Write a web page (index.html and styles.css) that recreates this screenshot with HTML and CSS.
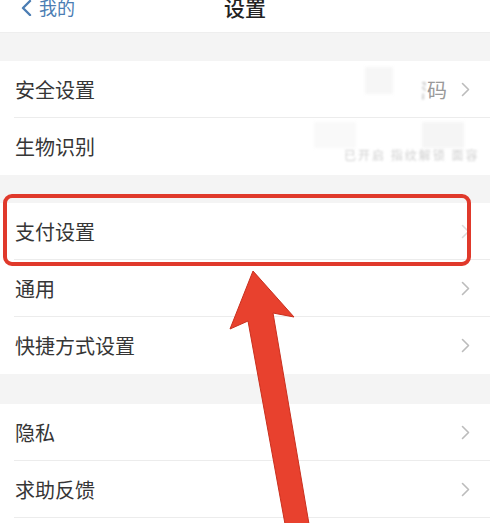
FILE: index.html
```html
<!DOCTYPE html>
<html lang="zh-CN">
<head>
    <meta charset="UTF-8">
    <meta name="viewport" content="width=device-width, initial-scale=1.0">
    <title>设置</title>
    <link rel="stylesheet" href="styles.css">
</head>
<body>
    <header class="nav-bar">
        <div class="nav-inner">
            <a href="#" class="nav-back">
                <svg class="back-icon" viewBox="0 0 12 16" width="12" height="16">
                    <polyline points="10,1 3,8 10,15" fill="none" stroke="currentColor" stroke-width="2.4" stroke-linejoin="round" stroke-linecap="round"/>
                </svg>
                我的
            </a>
            <h1 class="nav-title">设置</h1>
        </div>
    </header>

    <div class="group-gap"></div>

    <section class="group">
        <div class="cell">
            <span class="cell-label">安全设置</span>
            <span class="mosaic mosaic-square"></span>
            <span class="cell-value"><span class="cut">密</span>码</span>
            <svg class="chevron" viewBox="0 0 9 15" width="9" height="15"><polyline points="1.5,1.5 7.5,7.5 1.5,13.5"/></svg>
        </div>
        <div class="cell">
            <span class="cell-label">生物识别</span>
            <span class="mosaic mosaic-wide"></span>
            <span class="blur-text">已开启 指纹解锁 面容</span>
        </div>
    </section>

    <div class="group-gap"></div>

    <section class="group">
        <div class="cell highlighted">
            <span class="cell-label">支付设置</span>
            <svg class="chevron faint" viewBox="0 0 9 15" width="9" height="15"><polyline points="1.5,1.5 7.5,7.5 1.5,13.5"/></svg>
        </div>
        <div class="cell">
            <span class="cell-label">通用</span>
            <svg class="chevron" viewBox="0 0 9 15" width="9" height="15"><polyline points="1.5,1.5 7.5,7.5 1.5,13.5"/></svg>
        </div>
        <div class="cell">
            <span class="cell-label">快捷方式设置</span>
            <svg class="chevron" viewBox="0 0 9 15" width="9" height="15"><polyline points="1.5,1.5 7.5,7.5 1.5,13.5"/></svg>
        </div>
    </section>

    <div class="group-gap wide"></div>

    <section class="group">
        <div class="cell">
            <span class="cell-label">隐私</span>
            <svg class="chevron" viewBox="0 0 9 15" width="9" height="15"><polyline points="1.5,1.5 7.5,7.5 1.5,13.5"/></svg>
        </div>
        <div class="cell">
            <span class="cell-label">求助反馈</span>
            <svg class="chevron" viewBox="0 0 9 15" width="9" height="15"><polyline points="1.5,1.5 7.5,7.5 1.5,13.5"/></svg>
        </div>
        <div class="cell cell-stub"></div>
    </section>

    <!-- annotation arrow pointing at 支付设置 -->
    <svg class="annot-arrow" viewBox="0 0 490 523" width="490" height="523">
        <polygon points="253,271 294,317 273,313 309,524 285,524 248,321 230,329"
                 fill="#e8412e" stroke="#c9301f" stroke-width="1" stroke-linejoin="round"/>
    </svg>
</body>
</html>
```

FILE: styles.css
```css
:root {
    --text-color: #363636;
    --link-color: #4b7db3;
    --gap-bg: #f4f4f4;
    --line-color: #ececec;
    --chevron-color: #bcbcbc;
    --annot-red: #e0392b;
}

* {
    margin: 0;
    padding: 0;
    box-sizing: border-box;
}

body {
    font-family: "Noto Sans CJK SC", "Noto Sans", sans-serif;
    background: #fff;
    color: var(--text-color);
    width: 490px;
    height: 523px;
    overflow: hidden;
    position: relative;
}

.nav-bar {
    height: 33px;
    background: #fff;
    overflow: hidden;
    border-bottom: 1px solid #eee;
}

.nav-inner {
    position: relative;
    height: 30px;
    margin-top: -8px;
    display: flex;
    align-items: center;
    justify-content: center;
}

.nav-back {
    position: absolute;
    left: 20px;
    top: 0;
    height: 30px;
    display: flex;
    align-items: center;
    gap: 7px;
    color: var(--link-color);
    text-decoration: none;
    font-size: 18px;
}

.back-icon {
    margin-top: 2px;
}

.nav-title {
    font-size: 21px;
    font-weight: 500;
    color: #222;
    line-height: 30px;
}

.group-gap {
    height: 28px;
    background: var(--gap-bg);
}

.group-gap.wide {
    height: 30px;
}

.group {
    background: #fff;
}

.cell {
    position: relative;
    height: 57px;
    margin-left: 14px;
    padding-right: 20px;
    display: flex;
    align-items: center;
    border-bottom: 1px solid var(--line-color);
}

.group .cell:last-child {
    border-bottom: none;
}

.cell-stub {
    height: 6px;
}

.cell-label {
    flex: 1;
    font-size: 20px;
    color: var(--text-color);
    padding-left: 1px;
}

.cell-value {
    font-size: 20px;
    color: #9a9a9a;
    margin-right: 14px;
}

.cut {
    display: inline-block;
    width: 5px;
    overflow: hidden;
    color: #c8c8c8;
    filter: blur(1px);
    direction: rtl;
    vertical-align: top;
}

.chevron {
    fill: none;
    stroke: var(--chevron-color);
    stroke-width: 1.6;
    stroke-linecap: round;
    stroke-linejoin: round;
}

.chevron.faint {
    stroke: #dcdcdc;
}

.mosaic {
    position: absolute;
    background: #f6f6f6;
    filter: blur(1.5px);
}

.mosaic-square {
    left: 351px;
    top: 6px;
    width: 28px;
    height: 27px;
}

.mosaic-wide {
    left: 300px;
    top: 4px;
    width: 42px;
    height: 26px;
    background: #f9f9f9;
    box-shadow: 108px 0 0 #f5f5f5;
}

.blur-text {
    position: absolute;
    left: 330px;
    top: 28px;
    font-size: 12px;
    letter-spacing: 2px;
    color: #cfcfcf;
    filter: blur(1px);
}

.highlighted::after {
    content: "";
    position: absolute;
    top: -9px;
    bottom: -7px;
    left: -11px;
    right: 19px;
    border: 4px solid var(--annot-red);
    border-radius: 9px;
}

.annot-arrow {
    position: absolute;
    left: 0;
    top: 0;
    pointer-events: none;
}
```
